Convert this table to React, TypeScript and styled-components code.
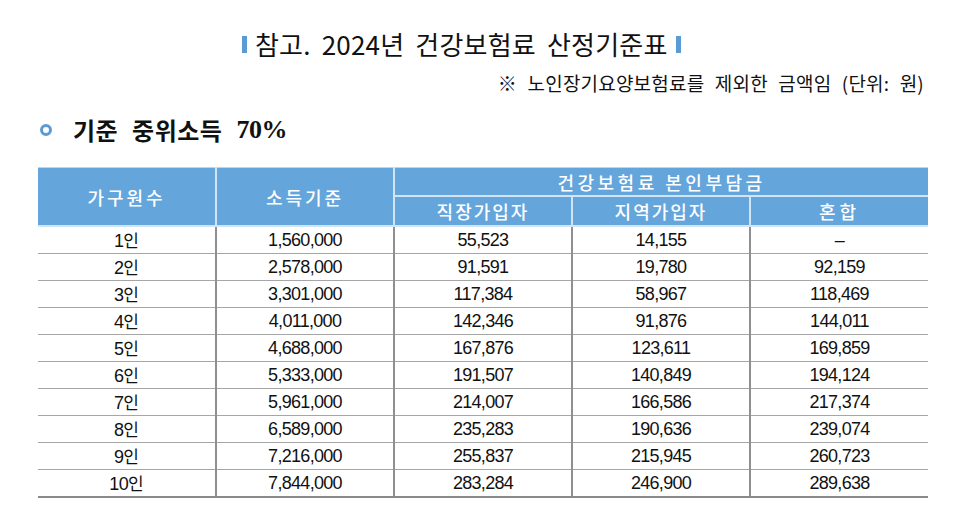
import React from "react";
import styled, { createGlobalStyle } from "styled-components";

const Global = createGlobalStyle`
  html, body { margin: 0; padding: 0; background: #ffffff; }
  body { font-family: "Noto Sans CJK KR", "Noto Sans", sans-serif; color: #111; }
`;

const Page = styled.div`
  width: 964px;
  height: 514px;
  box-sizing: border-box;
  padding-top: 28px;
  display: flex;
  flex-direction: column;
`;

const TitleRow = styled.div`
  display: flex;
  align-items: center;
  gap: 8px;
  margin-left: 242px;
  height: 32px;
`;

const Bar = styled.span`
  display: inline-block;
  width: 5px;
  height: 17px;
  background: #5b9bd5;
`;

const Title = styled.h1`
  margin: 0;
  font-size: 26px;
  font-weight: 400;
  line-height: 32px;
  word-spacing: 5px;
  letter-spacing: 0.2px;
  color: #111;
`;

const Note = styled.div`
  align-self: flex-end;
  margin-right: 40px;
  margin-top: 12px;
  font-size: 19px;
  line-height: 22px;
  word-spacing: 6px;
  letter-spacing: 0.2px;
  color: #111;
`;

const Heading = styled.h2`
  display: flex;
  align-items: center;
  margin: 22px 0 0 40px;
  font-size: 24px;
  font-weight: 700;
  line-height: 28px;
  letter-spacing: 0.5px;
  word-spacing: 8px;
  color: #111;
  white-space: pre;
`;

const Bullet = styled.span`
  display: inline-block;
  width: 12px;
  height: 12px;
  box-sizing: border-box;
  border: 3.5px solid #5b9bd5;
  border-radius: 50%;
  margin-right: 21px;
`;

const Percent = styled.span`
  font-family: "Liberation Serif", "Times New Roman", serif;
  font-weight: 700;
  font-size: 26px;
  letter-spacing: -0.5px;
`;

const Table = styled.table`
  margin: 23px 0 0 38px;
  width: 890px;
  border-collapse: collapse;
  table-layout: fixed;
`;

const Th = styled.th<{ $ls?: number; $h: number }>`
  background: #64a5db;
  color: #ffffff;
  font-weight: 500;
  font-size: 18px;
  letter-spacing: ${(p) => p.$ls ?? 2}px;
  height: ${(p) => p.$h}px;
  padding: 0;
  border: 2px solid #d2e5f6;
  border-top: 1px solid #b9d6f0;
  line-height: 1;
  &:first-child { border-left: none; }
  &:last-child { border-right: none; }
`;

const Td = styled.td`
  font-family: "Liberation Sans", Arial, sans-serif;
  font-size: 18px;
  line-height: 1;
  letter-spacing: -0.7px;
  text-align: center;
  height: 26px;
  padding: 0;
  color: #111;
  border-bottom: 1px solid #a6a6a6;
  border-left: 2px solid #8f8f8f;
  &:first-child { border-left: none; }
`;

const Unit = styled.span`
  font-family: "Noto Sans CJK KR", sans-serif;
  font-size: 17px;
  line-height: 1;
  letter-spacing: 0;
`;

const LastRow = styled.tr`
  & > td { border-bottom: 2px solid #8a8a8a; }
`;

const rows: [string, string, string, string, string][] = [
  ["1", "1,560,000", "55,523", "14,155", "–"],
  ["2", "2,578,000", "91,591", "19,780", "92,159"],
  ["3", "3,301,000", "117,384", "58,967", "118,469"],
  ["4", "4,011,000", "142,346", "91,876", "144,011"],
  ["5", "4,688,000", "167,876", "123,611", "169,859"],
  ["6", "5,333,000", "191,507", "140,849", "194,124"],
  ["7", "5,961,000", "214,007", "166,586", "217,374"],
  ["8", "6,589,000", "235,283", "190,636", "239,074"],
  ["9", "7,216,000", "255,837", "215,945", "260,723"],
  ["10", "7,844,000", "283,284", "246,900", "289,638"],
];

export default function App() {
  return (
    <Page>
      <Global />
      <TitleRow>
        <Bar />
        <Title>참고. 2024년 건강보험료 산정기준표</Title>
        <Bar />
      </TitleRow>
      <Note>※ 노인장기요양보험료를 제외한 금액임 (단위: 원)</Note>
      <Heading>
        <Bullet />
        기준 중위소득 <Percent>70%</Percent>
      </Heading>
      <Table>
        <thead>
          <tr>
            <Th rowSpan={2} $h={27} $ls={3}>가구원수</Th>
            <Th rowSpan={2} $h={27} $ls={3}>소득기준</Th>
            <Th colSpan={3} $h={27} $ls={3.5}>건강보험료 본인부담금</Th>
          </tr>
          <tr>
            <Th $h={28}>직장가입자</Th>
            <Th $h={28}>지역가입자</Th>
            <Th $h={28} $ls={4}>혼합</Th>
          </tr>
        </thead>
        <tbody>
          {rows.map((r, i) => {
            const cells = (
              <>
                <Td>
                  {r[0]}
                  <Unit>인</Unit>
                </Td>
                <Td>{r[1]}</Td>
                <Td>{r[2]}</Td>
                <Td>{r[3]}</Td>
                <Td>{r[4]}</Td>
              </>
            );
            return i === rows.length - 1 ? (
              <LastRow key={i}>{cells}</LastRow>
            ) : (
              <tr key={i}>{cells}</tr>
            );
          })}
        </tbody>
      </Table>
    </Page>
  );
}
